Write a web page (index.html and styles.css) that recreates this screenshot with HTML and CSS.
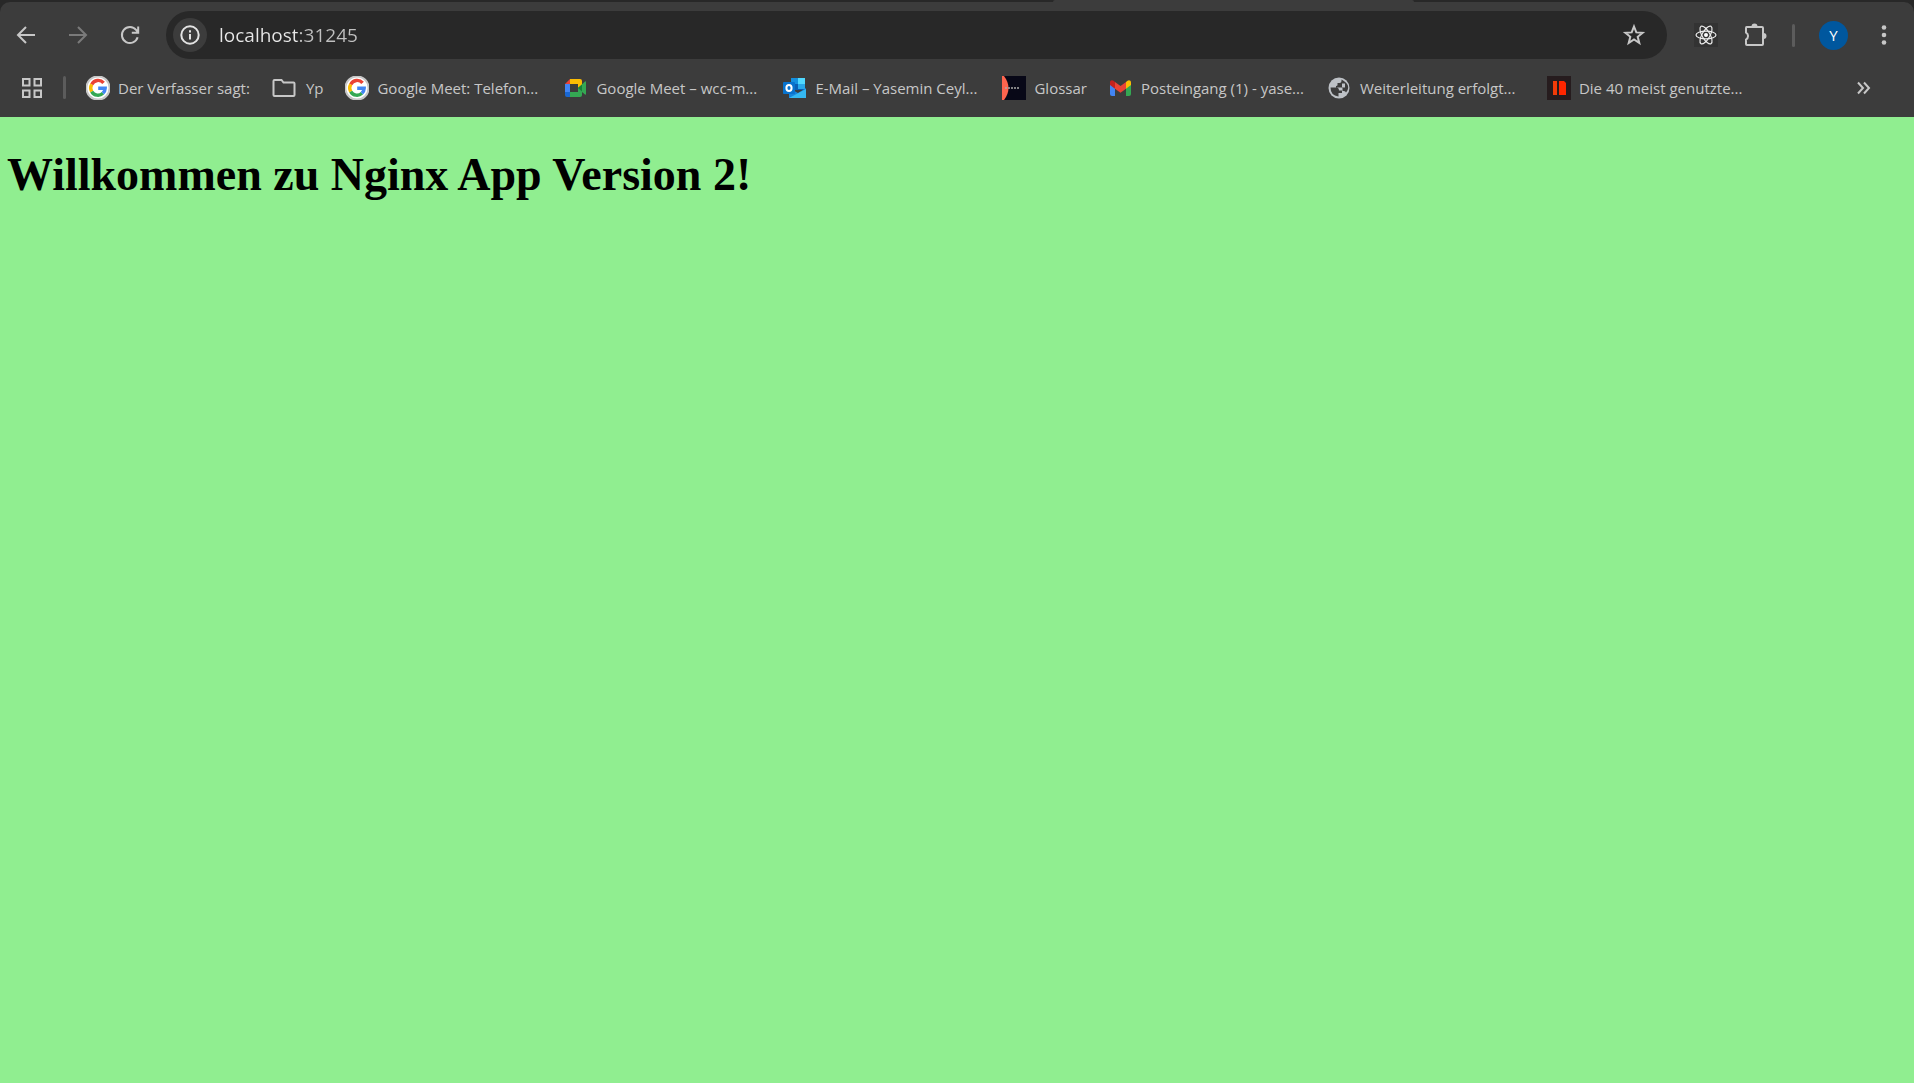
FILE: index.html
```html
<!DOCTYPE html>
<html lang="de">
<head>
<meta charset="utf-8">
<title>Nginx App</title>
<link rel="stylesheet" href="styles.css">
</head>
<body>
<svg class="defs" aria-hidden="true">
  <symbol id="google" viewBox="0 0 24 24">
    <circle cx="12" cy="12" r="11.6" fill="#fff"/>
    <g fill="none" stroke-width="3.4">
      <path d="M17.6 6.9A7.2 7.2 0 0 0 5.7 8.4" stroke="#ea4335"/>
      <path d="M5.7 8.4a7.2 7.2 0 0 0 0 7.2" stroke="#fbbc04"/>
      <path d="M5.7 15.6a7.2 7.2 0 0 0 11.2 1.7" stroke="#34a853"/>
      <path d="M12.2 12.2h7a7.2 7.2 0 0 1-2.3 5.1" stroke="#4285f4"/>
    </g>
  </symbol>
</svg>
<header class="browser">
  <div class="tabstrip"><span class="tab"></span></div>
  <nav class="toolbar" aria-label="Navigation">
    <div class="history">
      <button class="tool" aria-label="Zurück"><svg width="24" height="24" viewBox="0 0 24 24"><path d="M21 12H4.500M12 4l-8 8 8 8"/></svg></button>
      <button class="tool tool-off" aria-label="Vorwärts"><svg width="24" height="24" viewBox="0 0 24 24"><path d="M3 12h16.500M12 4l8 8-8 8"/></svg></button>
      <button class="tool" aria-label="Neu laden"><svg width="24" height="24" viewBox="0 0 24 24"><path d="M19.600 14.200A8 8 0 1 1 18.200 7L20 9M20.200 3.500v6.300h-6.400"/></svg></button>
    </div>
    <div class="omnibox">
      <button class="info" aria-label="Websiteinformationen"><svg width="24" height="24" viewBox="0 0 24 24"><circle cx="12" cy="12" r="8.700"/><path d="M12 11v5.500M12 7.300v2.200"/></svg></button>
      <input class="address" type="text" value="localhost:31245" aria-label="Adresse">
      <button class="tool star" aria-label="Lesezeichen hinzufügen"><svg width="24" height="24" viewBox="0 0 24 24"><path d="M12 3.500l2.300 5.900 6.300.400-4.900 4 1.600 6.200-5.300-3.500L6.700 20l1.600-6.200-4.900-4 6.300-.400z"/></svg></button>
    </div>
    <div class="actions">
      <button class="tool" aria-label="React Developer Tools"><svg width="24" height="24" viewBox="0 0 24 24"><rect width="24" height="24" fill="#333" stroke="none"/><g stroke="#eee" stroke-width="1.200"><ellipse cx="12" cy="12" rx="10" ry="3.900"/><ellipse cx="12" cy="12" rx="10" ry="3.900" transform="rotate(60 12 12)"/><ellipse cx="12" cy="12" rx="10" ry="3.900" transform="rotate(120 12 12)"/></g><circle cx="12" cy="12" r="2" fill="#fff" stroke="none"/></svg></button>
      <button class="tool" aria-label="Erweiterungen"><svg width="26" height="26" viewBox="0 0 26 26"><path d="M4.500 5h15.500q1 0 1 1v16q0 1-1 1H5q-1 0-1-1v-4.500a4 4 0 0 0 0-7V6q0-1 .500-1z"/><path d="M9.500 4.500a3 3 0 0 1 6 0zM21.500 11a3 3 0 0 1 0 6z" fill="#c7c7c7" stroke="none"/></svg></button>
      <span class="divider"></span>
      <button class="avatar" aria-label="Profil">Y</button>
      <button class="tool menu" aria-label="Menü"><svg width="24" height="24" viewBox="0 0 24 24"><g fill="#c7c7c7" stroke="none"><circle cx="12" cy="4.500" r="2.300"/><circle cx="12" cy="12" r="2.300"/><circle cx="12" cy="19.500" r="2.300"/></g></svg></button>
    </div>
  </nav>
  <nav class="bookmarks" aria-label="Lesezeichen">
    <button class="tool" aria-label="Apps"><svg width="24" height="24" viewBox="0 0 24 24"><path d="M3 3h6.500v6.500H3zM14.500 3H21v6.500h-6.500zM3 14.500h6.500V21H3zM14.500 14.500H21V21h-6.500z"/></svg></button>
    <span class="divider"></span>
    <div class="links">
      <a class="bookmark" href="#"><svg width="24" height="24"><use href="#google"/></svg>Der Verfasser sagt:</a>
      <a class="bookmark folder" href="#"><svg width="24" height="24" viewBox="0 0 24 24"><path d="M2.500 4h7l2 2.500h10q1 0 1 1V19q0 1-1 1h-19q-1 0-1-1V5q0-1 1-1z"/></svg>Yp</a>
      <a class="bookmark long" href="#"><svg width="24" height="24"><use href="#google"/></svg>Google Meet: Telefon...</a>
      <a class="bookmark long" href="#"><svg width="24" height="24" viewBox="0 0 24 24"><g stroke="none"><path d="M6 3v5H1z" fill="#ea4335"/><path d="M6 3h10q2 0 2 2v4l-4 3V8H6z" fill="#fbbc04"/><path d="M1 8h5v8H1z" fill="#4285f4"/><path d="M1 16h5v5H3q-2 0-2-2z" fill="#1967d2"/><path d="M6 16h8v-4l7-6.500q1-.8 1 .5v12q0 1.300-1 .5l-3-2.500v3q0 2-2 2H6z" fill="#34a853"/><path d="M14 12l4-3.500v7z" fill="#188038"/></g></svg>Google Meet – wcc-m...</a>
      <a class="bookmark long" href="#"><svg width="24" height="24" viewBox="0 0 24 24"><g stroke="none"><path d="M8 2h14v12H8z" fill="#0a5fb4"/><path d="M8 2h7v6H8z" fill="#1490df"/><path d="M15 2h7v6h-7z" fill="#50d9ff"/><path d="M15 8h7v5h-7z" fill="#28a8ea"/><path d="M6 12l9 5 8-5v10H6z" fill="#1784d9"/><path d="M6 22l17-9v9z" fill="#35b8f1"/><rect y="6" width="12" height="12" rx="1" fill="#0873ce"/></g><ellipse cx="6" cy="12" rx="2.600" ry="3" stroke="#fff"/></svg>E-Mail – Yasemin Ceyl...</a>
      <a class="bookmark" href="#"><svg width="24" height="24" viewBox="0 0 24 24"><g stroke="none"><path d="M0 0h24v24H0z" fill="#080817"/><path d="M0 0h2q9 12 0 24H0z" fill="#ff654e"/></g><path d="M3 12h15" stroke="#aaa" stroke-width="1.500" stroke-dasharray="2 1"/></svg>Glossar</a>
      <a class="bookmark long" href="#"><svg width="24" height="24" viewBox="0 0 24 24"><g stroke="none"><path d="M1 8l5 4v8H3q-2 0-2-2z" fill="#4285f4"/><path d="M22 8l-5 4v8h3q2 0 2-2z" fill="#34a853"/><path d="M17 6l1.500-1.200C20 3.500 22 4.500 22 6.500V9l-5 3.700z" fill="#fbbc04"/><path d="M6 6l5.500 4L17 6v6.700l-5.500 4-5.500-4z" fill="#ea4335"/><path d="M1 6.500c0-2 2-3 3.500-1.700L6 6v6.700L1 9z" fill="#c5221f"/></g></svg>Posteingang (1) - yase...</a>
      <a class="bookmark long" href="#"><svg width="24" height="24" viewBox="0 0 24 24"><circle cx="11" cy="12" r="10.500" fill="#bdc1c6" stroke="none"/><path d="M2.500 11.500H8q3 0 3 3h3v2.500h-3.500v3.500q-8-1-8-9zM13.500 3.500v1.500q0 2-2 2h-2v2q0 1-1.500 1v1.500h5.500q1 0 1 1v2.500h1.500q1.500 0 2 1.500 6-7.500-4.500-13z" fill="#3c3c3c" stroke="none"/><path d="M14 7.500h3v4h-3z" fill="#bdc1c6" stroke="none"/></svg>Weiterleitung erfolgt...</a>
      <a class="bookmark long" href="#"><svg width="24" height="24" viewBox="0 0 24 24"><g stroke="none"><path d="M0 0h24v24H0z" fill="#261c1e"/><path d="M6 5h4v14H6z" fill="#f23b08"/><path d="M12 5h5l2 2v12h-7z" fill="#ff2600"/></g></svg>Die 40 meist genutzte...</a>
    </div>
    <button class="tool more" aria-label="Weitere Lesezeichen"><svg width="24" height="24" viewBox="0 0 24 24"><path d="M6 6.500l5 5.500-5 5.500M12 6.500l5 5.500-5 5.500"/></svg></button>
  </nav>
</header>
<main class="page"><h1>Willkommen zu Nginx App Version 2!</h1></main>
</body>
</html>
```
FILE: styles.css
```css
* { box-sizing: border-box; }

body {
  margin: 0;
  min-height: 100vh;
  background: #90ee90;
  font-family: "Open Sans", "Noto Sans", sans-serif;
}

.defs { display: none; }

button {
  padding: 0;
  border: 0;
  background: none;
  font: inherit;
}

svg {
  flex: none;
  fill: none;
  stroke: #c7c7c7;
  stroke-width: 2;
}

.browser {
  background: #282828;
  color: #c7c7c7;
}

.tabstrip {
  display: flex;
  height: 2px;
  padding-left: 55%;
}

.tab {
  width: 42%;
  border-radius: 4px 4px 0 0;
  background: #3c3c3c;
}

.toolbar {
  display: flex;
  align-items: center;
  height: 66px;
  padding: 0 18px 0 14px;
  border-radius: 10px 10px 0 0;
  background: #3c3c3c;
}

.history { display: flex; gap: 28px; width: 152px; }

.tool {
  display: flex;
  align-items: center;
  justify-content: center;
  min-width: 24px;
}

.tool-off { opacity: 0.45; }

.omnibox {
  display: flex;
  flex: 1;
  align-items: center;
  height: 48px;
  padding: 0 21px 0 7px;
  border-radius: 24px;
  background: #282828;
}

.info {
  display: flex;
  align-items: center;
  justify-content: center;
  width: 34px;
  height: 34px;
  border-radius: 50%;
  background: #3c3c3c;
}

.info svg { stroke: #e3e3e3; }

.address {
  flex: 1;
  min-width: 0;
  margin-left: 12px;
  padding: 0;
  border: 0;
  outline: 0;
  background: linear-gradient(90deg, #e8e8e8 78px, #c0c0c0 78px);
  background-clip: text;
  color: #e8e8e8;
  -webkit-text-fill-color: transparent;
  font: 19px/28px "Open Sans", "Noto Sans", sans-serif;
}

.actions {
  display: flex;
  align-items: center;
  padding-left: 27px;
  gap: 24px;
}

.divider {
  width: 3px;
  height: 23px;
  border-radius: 2px;
  background: #5c5c5c;
}

.avatar {
  width: 29px;
  height: 29px;
  border-radius: 50%;
  background: #00579e;
  color: #fff;
  font-size: 15px;
}

.bookmarks {
  display: flex;
  align-items: center;
  height: 49px;
  padding: 0 38px 10px 20px;
  background: #3c3c3c;
}

.bookmarks .divider { margin: 0 20px 0 19px; }

.links {
  display: flex;
  flex: 1;
  min-width: 0;
  overflow: hidden;
}

.bookmark {
  display: flex;
  flex: none;
  align-items: center;
  gap: 8px;
  padding-right: 22px;
  color: #c7c7c7;
  font-size: 15px;
  line-height: 24px;
  text-decoration: none;
  white-space: nowrap;
}

.folder { gap: 10px; }

.long { width: 219px; padding-right: 0; }

.page { padding: 32px 7px; }

h1 {
  margin: 0;
  color: #000;
  font: bold 46px/52px "Liberation Serif", serif;
}
```
